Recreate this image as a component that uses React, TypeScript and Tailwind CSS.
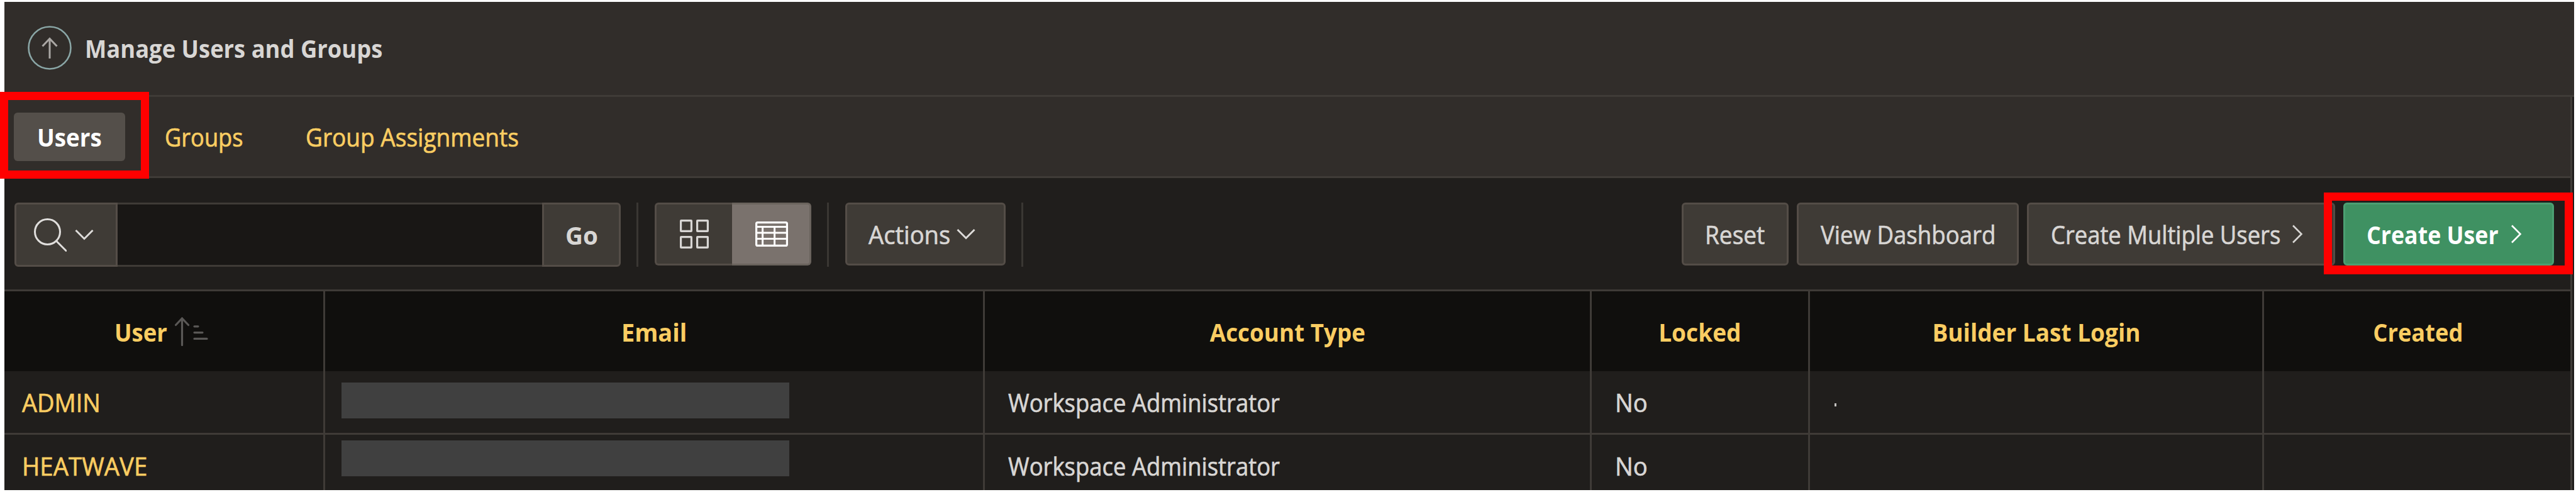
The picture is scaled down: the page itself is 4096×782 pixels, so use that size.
import type { ReactNode } from "react";

const columns = [
  { label: "User", sorted: true, fit: "w-[85px] scale-x-[0.913]" },
  { label: "Email", fit: "scale-x-[0.945]" },
  { label: "Account Type", fit: "scale-x-[0.92]" },
  { label: "Locked", fit: "scale-x-[0.927]" },
  { label: "Builder Last Login", fit: "scale-x-[0.925]" },
  { label: "Created", fit: "scale-x-[0.907]" },
];

const users = [
  { name: "ADMIN", fit: "scale-x-[0.949]", type: "Workspace Administrator", locked: "No", mark: true, offset: "mt-[18px]" },
  { name: "HEATWAVE", fit: "scale-x-[0.961]", type: "Workspace Administrator", locked: "No", mark: false, offset: "mt-[9px]" },
];

const gridCols = "grid grid-cols-[510px_1049px_965px_347px_722px_490px]";

/* Text set slightly narrower than the face's natural width. */
function Label({ className, children }: { className: string; children: ReactNode }) {
  return <span className={`inline-block translate-y-px ${className}`}>{children}</span>;
}

function ArrowUpCircle() {
  return (
    <svg className="h-[70px] w-[70px]" viewBox="0 0 70 70" fill="none">
      <circle cx="35" cy="35" r="33.5" stroke="#8aa6a6" strokeWidth="2.6" />
      <path d="M35 52V20M23.5 32.5L35 20.5L46.5 32.5" stroke="#aaa7a4" strokeWidth="3" />
    </svg>
  );
}

function SearchIcon() {
  return (
    <svg className="h-[53px] w-[52px]" viewBox="0 0 52 53" fill="none" stroke="#e0dedc" strokeWidth="3">
      <circle cx="21.5" cy="21.5" r="20" />
      <path d="M35.5 36L51 51.5" strokeLinecap="round" />
    </svg>
  );
}

function ChevronDown() {
  return (
    <svg className="h-[18px] w-[30px]" viewBox="0 0 30 18" fill="none" stroke="#dddbd9" strokeWidth="3">
      <path d="M1.5 2L15 15.5L28.5 2" />
    </svg>
  );
}

function ChevronRight() {
  return (
    <svg className="h-[30px] w-[18px]" viewBox="0 0 18 30" fill="none" stroke="currentColor" strokeWidth="2.6">
      <path d="M2 1.5L15.5 15L2 28.5" />
    </svg>
  );
}

function GridIcon() {
  return (
    <svg className="h-[46px] w-[46px]" viewBox="0 0 46 46" fill="none" stroke="#d8d6d4" strokeWidth="3.2">
      <rect x="1.6" y="1.6" width="16.8" height="16.8" rx="0.5" />
      <rect x="27.6" y="1.6" width="16.8" height="16.8" rx="0.5" />
      <rect x="1.6" y="27.6" width="16.8" height="16.8" rx="0.5" />
      <rect x="27.6" y="27.6" width="16.8" height="16.8" rx="0.5" />
    </svg>
  );
}

function TableIcon() {
  return (
    <svg className="h-[40px] w-[52px]" viewBox="0 0 52 40" fill="none" stroke="#ffffff" strokeWidth="3">
      <rect x="1.6" y="1.6" width="48.8" height="36.8" rx="2" strokeWidth="3.2" />
      <path d="M2 8.5H50M2 18H50M2 27.6H50M11.6 8.5V38M30.6 8.5V38" />
    </svg>
  );
}

function SortIcon() {
  return (
    <svg className="h-[46px] w-[54px]" viewBox="0 0 54 46" fill="none" stroke="#5a5856" strokeWidth="3.2" strokeLinecap="round">
      <path d="M11.5 44.5V2M1.6 12.5L11.5 2L21.5 12.5" />
      <path d="M31 14.8H37M31 24.6H44M31 34.4H51" />
    </svg>
  );
}

function Separator({ className }: { className: string }) {
  return <div className={`h-[102px] w-[3px] shrink-0 bg-[#3a3733] ${className}`} />;
}

function Button({ className, children }: { className: string; children: ReactNode }) {
  return (
    <button className={`flex h-[100px] shrink-0 items-center rounded-[6px] border-[3px] text-left ${className}`}>
      {children}
    </button>
  );
}

const neutral = "border-[#544d47] bg-[#3f3b36] text-[#d8d6d4] [-webkit-text-stroke:0.7px]";

export default function App() {
  return (
    <div className="relative h-[782px] w-[4096px] overflow-hidden bg-white pt-[3px] pr-[3px] pl-[7px] font-['Open_Sans',sans-serif] text-[40px] leading-none whitespace-nowrap text-[#d8d6d4]">
      <div className="flex h-[776px] flex-col overflow-hidden bg-[#201e1c]">
        <header className="flex h-[151px] shrink-0 items-center border-b-[3px] border-[#3f3b37] bg-[#312d2a] pb-[3px] pl-[37px]">
          <ArrowUpCircle />
          <h1 className="ml-[21px] font-bold">
            <Label className="origin-left scale-x-[0.909]">Manage Users and Groups</Label>
          </h1>
        </header>

        <div className="flex w-[4083px] shrink-0 flex-col border-r-[3px] border-[#3f3b37]">
          <nav className="flex h-[129px] shrink-0 items-center border-b-[3px] border-[#3f3b37] bg-[#312d2a] pl-[15px] text-[#facd62]">
            <a className="flex h-[77px] w-[177px] items-center rounded-[6px] bg-[#544f4a] pl-[37px] font-bold text-white">
              <Label className="origin-left scale-x-[0.92]">Users</Label>
            </a>
            <a className="ml-[63px] w-[224px] [-webkit-text-stroke:0.7px]">
              <Label className="origin-left scale-x-[0.905]">Groups</Label>
            </a>
            <a className="[-webkit-text-stroke:0.7px]">
              <Label className="origin-left scale-x-[0.926]">Group Assignments</Label>
            </a>
          </nav>

          <div className="flex h-[177px] shrink-0 items-start pt-[39px] pr-[26px] pl-[16px]">
            <div className="flex h-[102px] w-[964px] shrink-0">
              <button className="flex w-[164px] items-center rounded-l-[6px] border-[3px] border-[#544d47] bg-[#3f3b36] pl-[28px]">
                <SearchIcon />
                <span className="ml-[13px]">
                  <ChevronDown />
                </span>
              </button>
              <div className="flex-1 border-y-[3px] border-[#3f3b36] bg-[#191715]" />
              <button className="w-[125px] rounded-r-[6px] border-[3px] border-[#544d47] bg-[#3f3b36] font-bold">
                <Label className="scale-x-[0.965]">Go</Label>
              </button>
            </div>
            <Separator className="ml-[25px]" />
            <div className="ml-[26px] flex h-[100px] w-[249px] shrink-0">
              <button className="flex w-[123px] items-center rounded-l-[6px] border-[3px] border-r-0 border-[#544d47] bg-[#3f3b36] pl-[37px]">
                <GridIcon />
              </button>
              <button className="flex w-[126px] items-center rounded-r-[6px] border-[3px] border-l-0 border-[#6a635d] bg-[#7a726d] pl-[37px]">
                <TableIcon />
              </button>
            </div>
            <Separator className="ml-[25px]" />
            <Button className={`ml-[26px] w-[255px] pl-[34px] ${neutral}`}>
              <Label className="w-[140px] origin-left scale-x-[0.954]">Actions</Label>
              <ChevronDown />
            </Button>
            <Separator className="ml-[25px]" />
            <div className="ml-auto flex gap-[13px]">
              <Button className={`w-[170px] pl-[34px] ${neutral}`}>
                <Label className="origin-left scale-x-[0.926]">Reset</Label>
              </Button>
              <Button className={`w-[353px] pl-[35px] ${neutral}`}>
                <Label className="origin-left scale-x-[0.915]">View Dashboard</Label>
              </Button>
              <Button className={`w-[490px] pl-[35px] ${neutral}`}>
                <span className="w-[383px] shrink-0">
                  <Label className="origin-left scale-x-[0.909]">Create Multiple Users</Label>
                </span>
                <ChevronRight />
              </Button>
              <Button className="w-[335px] border-[#4c9f72] bg-[#3f9162] pl-[34px] font-bold text-white">
                <span className="w-[229px] shrink-0">
                  <Label className="origin-left scale-x-[0.893]">Create User</Label>
                </span>
                <ChevronRight />
              </Button>
            </div>
          </div>

          <div className={`${gridCols} h-[130px] shrink-0 border-t-[3px] border-[#3f3b37] bg-[#100f0d] font-bold text-[#facd62]`}>
            {columns.map((c) => (
              <div
                key={c.label}
                className={`flex items-center justify-center border-r-[3px] border-[#3f3b37] last:border-r-0 ${c.sorted ? "pr-[8px]" : ""}`}
              >
                <Label className={`${c.fit} ${c.sorted ? "origin-left" : ""}`}>{c.label}</Label>
                {c.sorted && (
                  <span className="ml-[11px]">
                    <SortIcon />
                  </span>
                )}
              </div>
            ))}
          </div>

          {users.map((u) => (
            <div
              key={u.name}
              className={`${gridCols} h-[101px] shrink-0 border-b-[3px] border-[#3f3b37] [-webkit-text-stroke:0.7px] *:flex *:border-r-[3px] *:border-[#3f3b37] *:last:border-r-0`}
            >
              <div className="items-center pl-[28px] text-[#facd62]">
                <Label className={`origin-left ${u.fit}`}>{u.name}</Label>
              </div>
              <div className="items-start pl-[26px]">
                <div className={`h-[57px] w-[712px] bg-[#404040] ${u.offset}`} />
              </div>
              <div className="items-center pl-[37px]">
                <Label className="origin-left scale-x-[0.911]">{u.type}</Label>
              </div>
              <div className="items-center pl-[37px]">
                <Label className="origin-left scale-x-[0.955]">{u.locked}</Label>
              </div>
              <div className="items-center pl-[39px]">
                {u.mark && <div className="mt-[8px] h-[5px] w-[3px] bg-[#c4c2c0]" />}
              </div>
              <div />
            </div>
          ))}
        </div>
      </div>

      <div className="absolute top-[146px] left-0 h-[138px] w-[237px] border-[13px] border-[#ff0000]" />
      <div className="absolute top-[306px] left-[3695px] h-[130px] w-[396px] border-[13px] border-b-[14px] border-[#ff0000]" />
    </div>
  );
}
